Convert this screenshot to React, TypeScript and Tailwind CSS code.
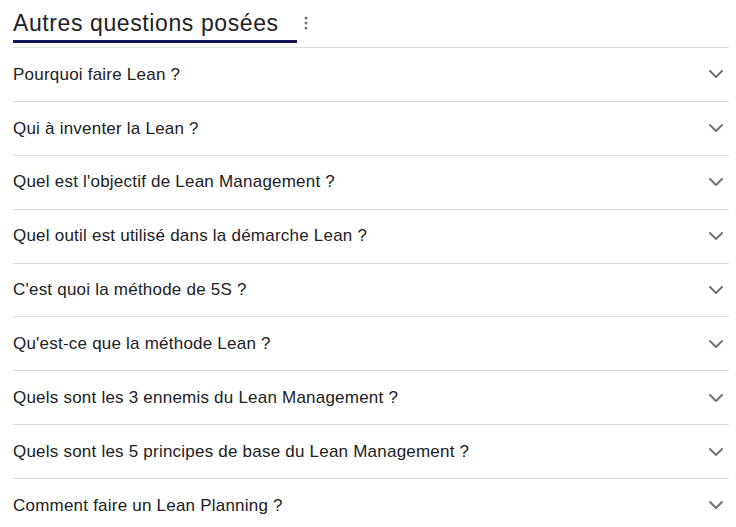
import { ChevronDown } from "lucide-react";

const questions = [
  "Pourquoi faire Lean ?",
  "Qui à inventer la Lean ?",
  "Quel est l'objectif de Lean Management ?",
  "Quel outil est utilisé dans la démarche Lean ?",
  "C'est quoi la méthode de 5S ?",
  "Qu'est-ce que la méthode Lean ?",
  "Quels sont les 3 ennemis du Lean Management ?",
  "Quels sont les 5 principes de base du Lean Management ?",
  "Comment faire un Lean Planning ?",
];

function Kebab() {
  return (
    <svg width="4" height="14" viewBox="0 0 4 14" className="text-[#70757a]">
      <circle cx="2" cy="2" r="1.5" fill="currentColor" />
      <circle cx="2" cy="7" r="1.5" fill="currentColor" />
      <circle cx="2" cy="12" r="1.5" fill="currentColor" />
    </svg>
  );
}

export default function App() {
  return (
    <div className="w-[736px] h-[527px] overflow-hidden bg-white pl-[13px] pr-[7px] font-['Liberation_Sans',Arial,sans-serif] text-[#202124]">
      <div className="flex items-center h-[47px]">
        <h2 className="h-[39px] pt-[5px] pr-[18px] border-b-[3px] border-[#14145a] text-[23px] leading-[28px] tracking-[0.6px]">
          Autres questions posées
        </h2>
        <button className="ml-[6px] mt-[-2px] px-[1px]">
          <Kebab />
        </button>
      </div>
      {questions.map((q) => (
        <div
          key={q}
          className="flex items-center justify-between h-[53.875px] border-t border-[#dadce0]"
        >
          <span className="text-[17px] tracking-[0.22px]">{q}</span>
          <ChevronDown size={24} strokeWidth={2} className="mr-[1px] text-[#70757a]" />
        </div>
      ))}
    </div>
  );
}
